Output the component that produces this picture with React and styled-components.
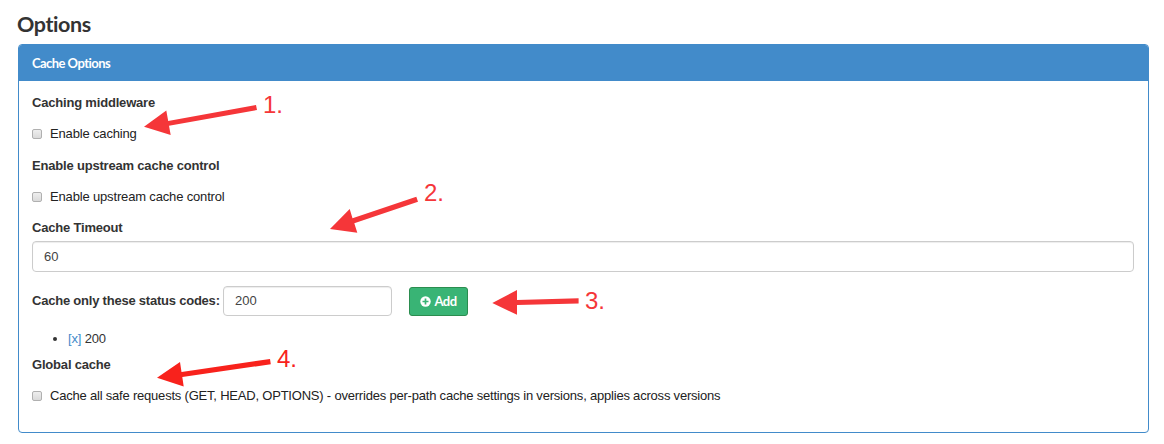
import React from 'react';
import styled, { createGlobalStyle } from 'styled-components';

const GlobalStyle = createGlobalStyle`
  *, *::before, *::after { box-sizing: border-box; }
  body {
    margin: 0;
    background: #fff;
    color: #333;
    font: 13px/18px "Liberation Sans", Arial, sans-serif;
  }
`;

const headingFont = 'Lato, "Noto Sans", sans-serif';

const Page = styled.main`
  position: relative;
  height: 444px;
  padding: 9px 15px 0 17px;
  overflow: hidden;
`;

const Title = styled.h3`
  margin: 0 0 5px;
  font: 700 21.5px/30px ${headingFont};
  letter-spacing: -0.4px;
`;

const Panel = styled.section`
  height: 389px;
  margin-left: 1px;
  border: 1px solid #428bca;
  border-radius: 4px;
  overflow: hidden;
`;

const PanelHeader = styled.header`
  height: 36px;
  padding: 0 13px;
  background: #428bca;
  color: #fff;
  font: 700 13px/36px ${headingFont};
  letter-spacing: -0.55px;
`;

const PanelBody = styled.div`
  display: flex;
  flex-direction: column;
  padding: 13px 14px 0 13px;
`;

const GroupLabel = styled.div`
  height: 18px;
  font-weight: bold;
  letter-spacing: -0.19px;
  white-space: nowrap;
`;

const CheckRow = styled.label`
  display: flex;
  align-items: center;
  gap: 8px;
  height: 18px;
  margin: ${(p) => p.$margin || '13px 0 14px'};
  color: #222;
  letter-spacing: ${(p) => p.$tracking || '-0.16px'};
  white-space: nowrap;
`;

const Checkbox = styled.input.attrs({ type: 'checkbox' })`
  appearance: none;
  flex: none;
  width: 10px;
  height: 10px;
  margin: 0;
  border: 1px solid #b0b0b0;
  border-radius: 2px;
  background: linear-gradient(#eee, #dadada);
`;

const TextInput = styled.input`
  width: ${(p) => p.$width || '100%'};
  height: ${(p) => p.$height || '30px'};
  padding: 0 11px;
  border: 1px solid #ccc;
  border-radius: 4px;
  box-shadow: inset 0 1px 1px rgba(0, 0, 0, 0.075);
  background: #fff;
  color: #444;
  font: inherit;
  outline: none;
`;

const TimeoutInput = styled(TextInput)`
  margin-top: 4px;
`;

const CodeInput = styled(TextInput)`
  padding-bottom: 2px;
`;

const CodeRow = styled.div`
  display: flex;
  align-items: center;
  height: 30px;
  margin-top: 14px;
`;

const CodeLabel = styled(GroupLabel)`
  width: 191px;
  letter-spacing: -0.22px;
`;

const AddButton = styled.button`
  display: flex;
  align-items: center;
  justify-content: center;
  gap: 3px;
  width: 59px;
  height: 29px;
  margin: 1px 0 0 17px;
  padding: 0 0 1px;
  border: 1px solid #2b8d4f;
  border-radius: 3px;
  background: #39b475;
  color: #fff;
  font: 700 13px/18px ${headingFont};
  letter-spacing: -0.5px;
`;

const CodeList = styled.ul`
  margin: 14px 0 8px;
  padding-left: 36px;
  letter-spacing: -0.16px;
`;

const CodeItem = styled.li`
  height: 18px;
`;

const RemoveLink = styled.a`
  color: #428bca;
  text-decoration: none;
`;

const Arrows = styled.svg`
  position: absolute;
  inset: 0;
  pointer-events: none;
`;

const StepNumber = styled.span`
  position: absolute;
  left: ${(p) => p.$x}px;
  top: ${(p) => p.$y}px;
  color: ${(p) => p.$color};
  font-size: 24px;
  line-height: 28px;
`;

const steps = [
  { label: '1.', x: 263, y: 91, color: '#f53639', points: '144,126.7 166.3,110.6 168.2,121 256,105 257,110 169,125.7 170.7,135' },
  { label: '2.', x: 424, y: 179, color: '#f53639', points: '330,229 349.7,209 352.5,218.3 416.3,196.7 418,201.7 354.3,223.3 357.3,232.7' },
  { label: '3.', x: 585, y: 287, color: '#f53639', points: '492.3,303 517,290 517,300 578.6,298.3 578.6,303.5 517,305 517,314.7' },
  { label: '4.', x: 277, y: 345, color: '#f8221c', points: '157,377.7 180,362 181.5,372 270,359 270.8,364.2 182.3,377 183.7,386.6' },
];

const PlusIcon = () => (
  <svg width="11" height="11" viewBox="0 0 11 11" aria-hidden="true">
    <circle cx="5.5" cy="5.5" r="5.2" fill="#fff" />
    <path d="M5.5 2.5v6M2.5 5.5h6" stroke="#39b475" strokeWidth="1.7" />
  </svg>
);

export default function App() {
  return (
    <Page>
      <GlobalStyle />
      <Title>Options</Title>
      <Panel>
        <PanelHeader>Cache Options</PanelHeader>
        <PanelBody>
          <GroupLabel>Caching middleware</GroupLabel>
          <CheckRow><Checkbox />Enable caching</CheckRow>
          <GroupLabel>Enable upstream cache control</GroupLabel>
          <CheckRow $margin="13px 0"><Checkbox />Enable upstream cache control</CheckRow>
          <GroupLabel>Cache Timeout</GroupLabel>
          <TimeoutInput $height="31px" defaultValue="60" />
          <CodeRow>
            <CodeLabel>Cache only these status codes:</CodeLabel>
            <CodeInput $width="169px" defaultValue="200" />
            <AddButton><PlusIcon />Add</AddButton>
          </CodeRow>
          <CodeList>
            <CodeItem><RemoveLink>[x]</RemoveLink> 200</CodeItem>
          </CodeList>
          <GroupLabel>Global cache</GroupLabel>
          <CheckRow $tracking="-0.205px">
            <Checkbox />
            Cache all safe requests (GET, HEAD, OPTIONS) - overrides per-path cache settings in versions, applies across versions
          </CheckRow>
        </PanelBody>
      </Panel>
      <Arrows width="1164" height="444" viewBox="0 0 1164 444">
        {steps.map((s) => <polygon key={s.label} points={s.points} fill={s.color} />)}
      </Arrows>
      {steps.map((s) => (
        <StepNumber key={s.label} $x={s.x} $y={s.y} $color={s.color}>{s.label}</StepNumber>
      ))}
    </Page>
  );
}
